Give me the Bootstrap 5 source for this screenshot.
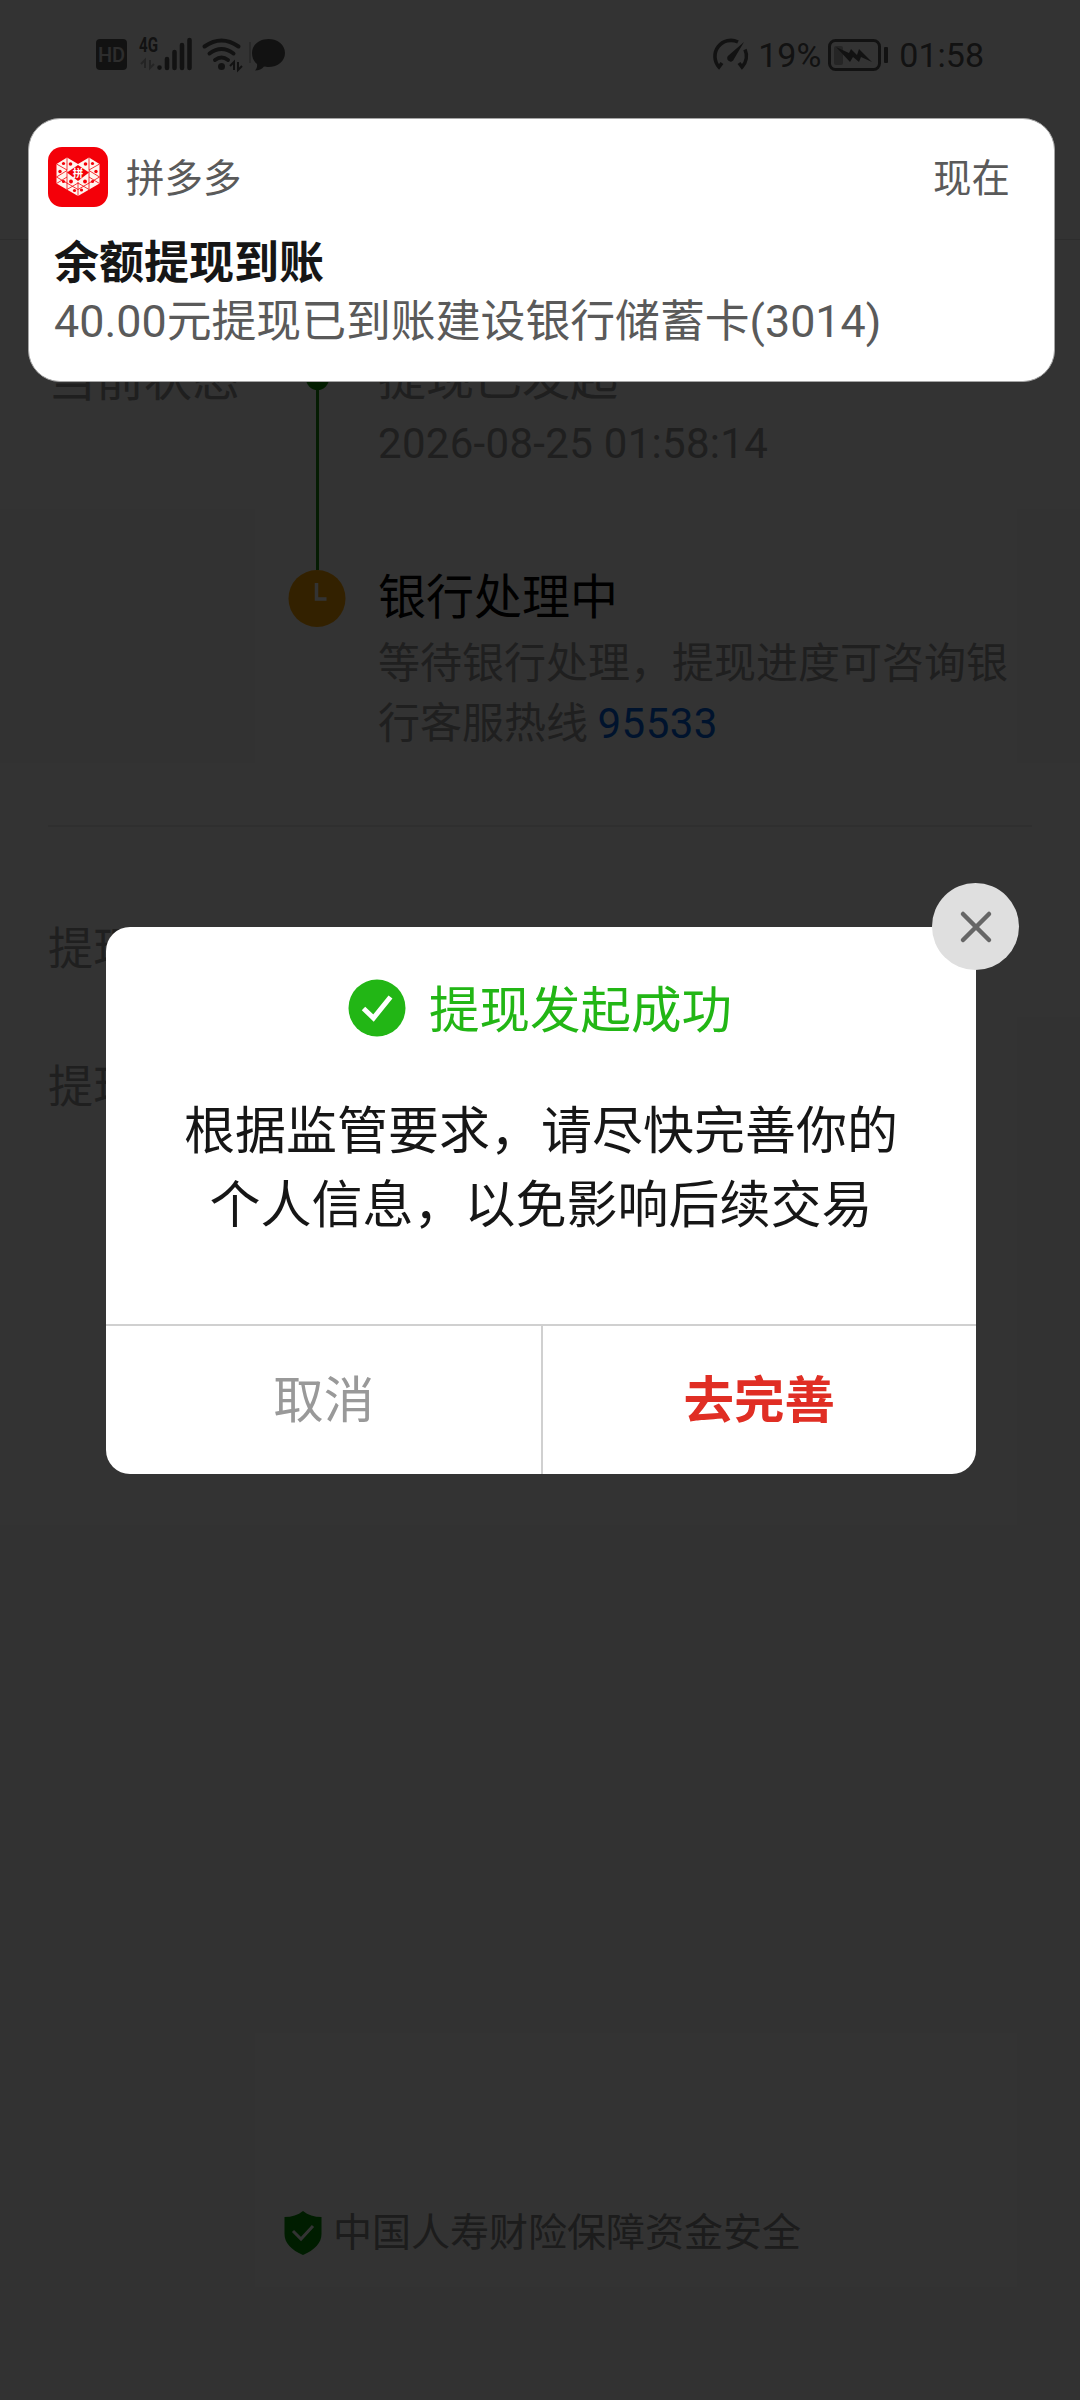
<!DOCTYPE html>
<html lang="zh-CN">
<head>
<meta charset="utf-8">
<meta name="viewport" content="width=device-width, initial-scale=1">
<title>提现详情</title>
<link href="https://cdn.jsdelivr.net/npm/bootstrap@5.3.0/dist/css/bootstrap.min.css" rel="stylesheet">
<style>
body{font-family:Roboto,"Noto Sans CJK SC",sans-serif;background:#fafafa;margin:0;color:#000}
.screen{width:1080px;height:2400px;overflow:hidden;background:#fcfcfc}
.statusbar{height:110px;padding:0 96px 0 96px;color:#5c5c5c;font-size:34px}
.statusbar svg{display:block;overflow:visible}
.battery{margin:0 10px 0 7px}
.topbar{height:130px;border-bottom:1px solid #dedede}
.detail{margin:0 48px;height:587px;border-bottom:2px solid #ececec;padding-top:109px}
.lbl{width:240px;font-size:48px;line-height:62px;color:#9a9a9a}
.rail{width:58px}
.dot-done{width:23px;height:23px;margin-top:18px;background:#0a8f00}
.rail-line{width:3px;height:180px;background:#1c8c10}
.steps{padding-left:32px;font-size:42px;line-height:60px;color:#9a9a9a}
.step-name{font-size:48px}
.step-date{margin-top:5px;letter-spacing:.3px}
.step-gap{height:94px}
.step-note{margin-top:6px}
.row-lbl{font-size:45px;line-height:60px;color:#9a9a9a;margin-left:48px}
.row-first{margin-top:93px}
.row-next{margin-top:78px}
.insure{font-size:39px;line-height:60px;color:#8a8a8a;gap:11px;padding:0 0 137px 5px}
.hot{color:#005fe0;letter-spacing:.5px;margin-left:-1px}
.shade{background:rgba(0,0,0,.8);z-index:10}
.notice{left:28px;right:25px;top:118px;height:264px;border-radius:32px;z-index:30;padding:28px 44px 0 19px;color:#5a5a5a;border:1px solid #a5a5a5}
.notice-head{height:60px;font-size:38.5px;gap:18px}
.notice-head span{padding-top:3px}
.notice-title{font-size:45px;line-height:60px;color:#161616;margin:27px 0 0 6px}
.notice-text{font-size:44.85px;line-height:60px;margin:-2px 0 0 6px}
.dialog-box{left:106px;top:927px;width:870px;height:547px;border-radius:24px;z-index:20;color:#161616}
.dialog-main{height:397px;padding-top:46px}
.dialog-title{font-size:50.5px;line-height:70px;color:#22b615;gap:23px;padding-right:2px}
.dialog-title span{padding-top:3px;margin-bottom:-3px}
.dialog-msg{font-size:51px;line-height:74px;margin-top:52px}
.dialog-foot{height:150px;border-top:2px solid #d0d0d0;font-size:50.5px}
.dialog-foot button{all:unset;flex:1;text-align:center;cursor:pointer;padding-top:2px}
.dialog-foot .cancel{color:#999;border-right:2px solid #d0d0d0;padding-left:1px}
.dialog-foot .go{color:#e02e24;font-weight:700}
.closer{right:-43px;top:-44px;width:87px;height:87px;background:#dfdfdf;border:0;padding:0}
</style>
</head>
<body>
<div class="screen position-relative d-flex flex-column">
  <div class="statusbar d-flex justify-content-between align-items-center">
    <svg width="190" height="34" viewBox="0 0 190 34">
      <rect x="0" y="1" width="31" height="31" rx="4" fill="#5c5c5c"/>
      <text x="15.500" y="24" text-anchor="middle" font-family="Roboto" font-size="20" font-weight="500" fill="#e0e0e0">HD</text>
      <text x="43" y="14" font-family="Roboto" font-size="20" font-weight="700" fill="#5c5c5c" textLength="19" lengthAdjust="spacingAndGlyphs">4G</text>
      <path d="M45 26l4-4v8M54 22v8l4-4" fill="none" stroke="#b4b4b4" stroke-width="2"/>
      <g stroke="#5c5c5c" stroke-width="4.600" stroke-linecap="round"><path d="M63.500 29.500v.1M71 21v9M78.500 14v16M86 7v23M93.500 2v28"/></g>
      <g fill="none" stroke="#5c5c5c" stroke-width="4" stroke-linecap="round"><path d="M108.500 8.500q17-12 34 0M113.500 15.500q12-9 24 0M119 22q6.500-5 13 0"/></g>
      <circle cx="125.500" cy="28.500" r="3.500" fill="#5c5c5c"/>
      <path d="M134 28l4-4v8M142 24v8l4-4" fill="none" stroke="#5c5c5c" stroke-width="2"/>
      <path d="M154 4v21" stroke="#999" stroke-width="1"/>
      <path d="M172.500 1c9.500 0 16.500 6 16.500 14s-7 14-16.500 14c-2 0-3-.2-4.500-.5-2 2.500-5 4-9 4 2-2 2.300-4 2-6.500-3.300-2.500-5-6.500-5-11 0-8 7-14 16.500-14z" fill="#5c5c5c"/>
    </svg>
    <div class="d-flex align-items-center">
      <svg width="38" height="34" viewBox="0 0 38 34" class="me-2">
        <path d="M26 4A16 16 0 0 0 7 29l3-4M33 11.500A16 16 0 0 1 30 29l-3-4" fill="none" stroke="#5c5c5c" stroke-width="3.600"/>
        <path d="M32 4L22 21a3.500 3.500 0 1 1-5-4z" fill="#5c5c5c"/>
      </svg>
      <span>19%</span>
      <svg width="61" height="34" viewBox="0 0 61 34" class="battery">
        <rect x="1.500" y="2.500" width="50" height="29" rx="6" fill="none" stroke="#5c5c5c" stroke-width="3"/>
        <rect x="6" y="8" width="9" height="19" rx="2" fill="#b8b8b8"/>
        <path d="M8 9l13 6 2-4 6 6 2-6 13 13-11-5-2 5-6-5-3 5z" fill="#5c5c5c"/>
        <rect x="56" y="9" width="4" height="16" rx="1" fill="#5c5c5c"/>
      </svg>
      <span>01:58</span>
    </div>
  </div>
  <div class="topbar"></div>

  <section class="detail d-flex">
    <div class="lbl">当前状态</div>
    <div class="rail d-flex flex-column align-items-center">
      <div class="dot-done rounded-circle flex-shrink-0"></div>
      <div class="rail-line flex-shrink-0"></div>
      <svg width="58" height="58" viewBox="0 0 58 58" class="flex-shrink-0">
        <circle cx="29" cy="28.500" r="28.500" fill="#ffa500"/>
        <path d="M28.500 13v16h10" fill="none" stroke="#fff" stroke-width="3.500"/>
      </svg>
    </div>
    <div class="steps flex-grow-1">
      <div class="step-name">提现已发起</div>
      <div class="step-date">2026-08-25 01:58:14</div>
      <div class="step-gap"></div>
      <div class="step-name text-black">银行处理中</div>
      <div class="step-note">等待银行处理，提现进度可咨询银<br>行客服热线 <span class="hot">95533</span></div>
    </div>
  </section>
  <div class="row-lbl row-first">提现</div>
  <div class="row-lbl row-next">提现</div>

  <footer class="insure mt-auto d-flex justify-content-center align-items-center">
    <svg width="38" height="44" viewBox="0 0 38 44">
      <path d="M19 0c5 4 11 6 18.500 6v17c0 9-7 16-18.500 21C7.500 39 .5 32 .5 23V6C8 6 14 4 19 0z" fill="#008f00"/>
      <path d="M9 20l8 8 12-13" fill="none" stroke="#fff" stroke-width="3"/>
    </svg>
    <span>中国人寿财险保障资金安全</span>
  </footer>

  <div class="shade position-absolute top-0 start-0 w-100 h-100"></div>

  <div class="notice bg-white position-absolute">
    <div class="notice-head d-flex align-items-center">
      <svg width="60" height="60" viewBox="0 0 60 60">
        <rect width="60" height="60" rx="14" fill="#f40009"/>
        <path d="M19 10.500L30 17l11-6.500L51.500 17v19.500L30 49 8.500 36.500V17z" fill="#fff4ee"/>
        <path d="M19 10.500V23M8.500 17L19 23M8.500 30L19 23.500 19 42.500M8.500 30L30 42.500M8.500 36.500L19 30M41 10.500V23M51.500 17L41 23M51.500 30L41 23.500 41 42.500M51.500 30L30 42.500M51.500 36.500L41 30M30 35V49M19 42.500L30 36M41 42.500L30 36" stroke="#f40009" stroke-width=".8" fill="none"/>
        <g fill="#f40009"><circle cx="15.500" cy="16.500" r="1.600"/><circle cx="22.500" cy="17" r="1.800"/><circle cx="12" cy="24.500" r="1.700"/><circle cx="15.500" cy="34.500" r="1.600"/><circle cx="23" cy="34.500" r="1.900"/><circle cx="26.500" cy="43.500" r="1.600"/><circle cx="33.500" cy="43" r="1.600"/><circle cx="37" cy="34.500" r="1.900"/><circle cx="44.500" cy="34.500" r="1.600"/><circle cx="48" cy="24.500" r="1.700"/><circle cx="37.500" cy="17" r="1.800"/><circle cx="44.500" cy="16.500" r="1.600"/></g>
        <path d="M30 18L41 25.500 30 34 19 25.500z" fill="#f40009"/>
        <text x="30" y="29.800" text-anchor="middle" font-family="Noto Sans CJK SC" font-size="10.500" font-weight="700" fill="#fff">拼</text>
      </svg>
      <span class="flex-grow-1">拼多多</span>
      <span>现在</span>
    </div>
    <div class="notice-title fw-bold">余额提现到账</div>
    <div class="notice-text">40.00元提现已到账建设银行储蓄卡(3014)</div>
  </div>

  <div class="dialog-box bg-white position-absolute">
    <div class="dialog-main">
      <div class="dialog-title d-flex justify-content-center align-items-center">
        <svg width="58" height="58" viewBox="0 0 58 58">
          <circle cx="29" cy="29" r="28.500" fill="#22b615"/>
          <path d="M15.500 29.500L25.500 39 42.500 18" fill="none" stroke="#fff" stroke-width="5"/>
        </svg>
        <span>提现发起成功</span>
      </div>
      <div class="dialog-msg text-center">根据监管要求，请尽快完善你的<br>个人信息，以免影响后续交易</div>
    </div>
    <div class="dialog-foot d-flex">
      <button class="cancel d-flex justify-content-center align-items-center">取消</button>
      <button class="go d-flex justify-content-center align-items-center">去完善</button>
    </div>
    <button class="closer rounded-circle position-absolute d-flex align-items-center justify-content-center" aria-label="关闭">
      <svg width="34" height="34" viewBox="0 0 34 34"><path d="M4 4l26 26M30 4L4 30" stroke="#666" stroke-width="4.500" stroke-linecap="round"/></svg>
    </button>
  </div>
</div>
<script src="https://cdn.jsdelivr.net/npm/bootstrap@5.3.0/dist/js/bootstrap.bundle.min.js"></script>
</body>
</html>
